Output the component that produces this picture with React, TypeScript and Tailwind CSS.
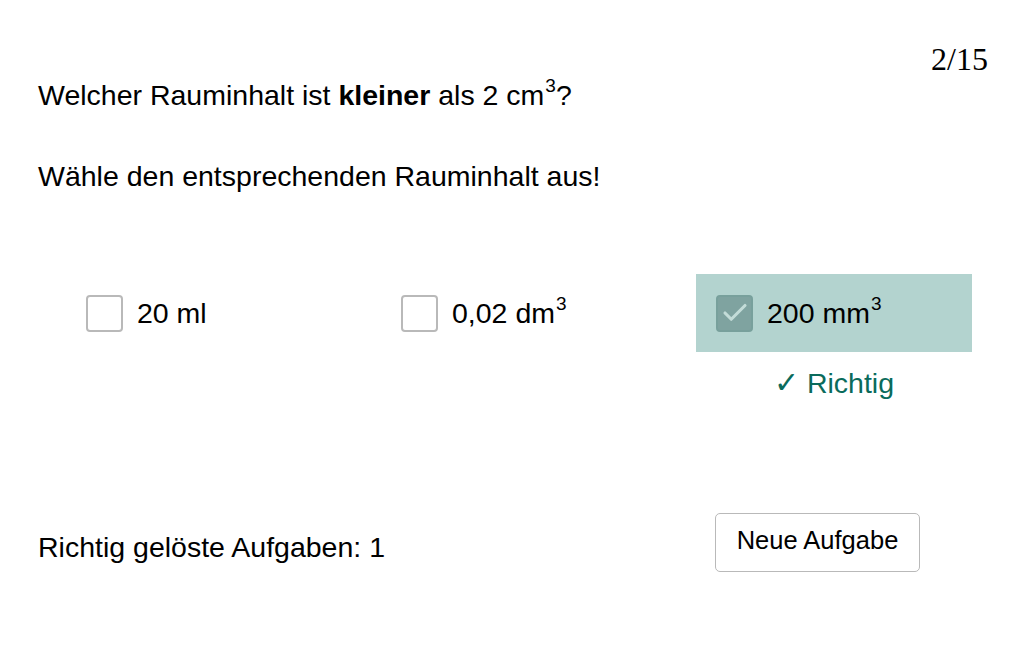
import { Check } from "lucide-react";

const options = [
  { label: "20 ml", sup: "", checked: false },
  { label: "0,02 dm", sup: "3", checked: false },
  { label: "200 mm", sup: "3", checked: true },
];

export default function App() {
  return (
    <div
      className="w-[1032px] h-[645px] bg-white text-black pl-[38px] pr-[44px] pt-[42px]"
      style={{ fontFamily: '"Liberation Sans", Arial, sans-serif' }}
    >
      <div className="flex justify-end">
        <span className="text-[32px] leading-[34px]" style={{ fontFamily: '"Liberation Serif", serif' }}>
          2/15
        </span>
      </div>

      <p className="text-[28.5px] leading-[32px] mt-[3px]">
        Welcher Rauminhalt ist <b>kleiner</b> als 2 cm<sup className="text-[19px] -top-[13px] ml-[1px]">3</sup>?
      </p>
      <p className="text-[28.5px] leading-[32px] mt-[49px]">Wähle den entsprechenden Rauminhalt aus!</p>

      <div className="flex gap-[39px] pl-[28px] mt-[82px]">
        {options.map((o) => (
          <div key={o.label} className="w-[276px] flex flex-col items-center">
            <div
              className={`w-full h-[78px] flex items-center gap-[14px] px-[20px] ${
                o.checked ? "bg-[#b3d3cf]" : ""
              }`}
            >
              {o.checked ? (
                <span className="w-[37px] h-[37px] rounded-[4px] bg-[#7fa3a0] border-2 border-[#78a09c] flex items-center justify-center">
                  <Check className="w-[30px] h-[30px] text-[#c3dcd8]" strokeWidth={2.5} />
                </span>
              ) : (
                <span className="w-[37px] h-[37px] rounded-[4px] border-2 border-[#b9b9b9] bg-white" />
              )}
              <span className="text-[28.5px] leading-[32px]">
                {o.label}
                {o.sup && <sup className="text-[19px] -top-[13px] ml-[1px]">{o.sup}</sup>}
              </span>
            </div>
            {o.checked && (
              <div className="text-[28.5px] leading-[32px] text-[#0a6b5c] mt-[15px]">
                <span className="text-[30px]">✓</span> Richtig
              </div>
            )}
          </div>
        ))}
      </div>

      <div className="flex items-center mt-[114px]">
        <span className="flex-1 text-[28.5px] leading-[32px] pt-[8px]">Richtig gelöste Aufgaben: 1</span>
        <button className="w-[205px] h-[59px] mr-[68px] rounded-[5px] border border-[#b9b9b9] bg-white text-[25.5px] pb-[4px]">
          Neue Aufgabe
        </button>
      </div>
    </div>
  );
}
